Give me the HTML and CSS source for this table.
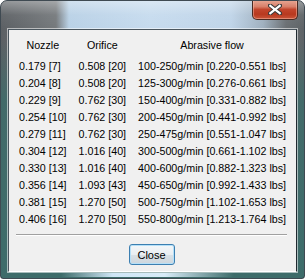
FILE: index.html
```html
<!DOCTYPE html>
<html>
<head>
<meta charset="utf-8">
<link rel="stylesheet" href="styles.css">
</head>
<body>
<div class="window">
  <div class="titlebar">
    <div class="close-x">
      <svg width="14" height="11" viewBox="0 0 14 11">
        <path d="M2 1.5 L12 9.5 M12 1.5 L2 9.5" stroke="#3a3a3a" stroke-width="4.2" stroke-linecap="square"/>
        <path d="M2.3 1.8 L11.7 9.2 M11.7 1.8 L2.3 9.2" stroke="#ffffff" stroke-width="2.2" stroke-linecap="square"/>
      </svg>
    </div>
  </div>
  <div class="client">
    <div class="table">
      <div class="th">Nozzle</div><div class="th">Orifice</div><div class="th">Abrasive flow</div>
      <div class="td first">0.179 [7]</div><div class="td first">0.508 [20]</div><div class="td first">100-250g/min [0.220-0.551 lbs]</div>
      <div class="td">0.204 [8]</div><div class="td">0.508 [20]</div><div class="td">125-300g/min [0.276-0.661 lbs]</div>
      <div class="td">0.229 [9]</div><div class="td">0.762 [30]</div><div class="td">150-400g/min [0.331-0.882 lbs]</div>
      <div class="td">0.254 [10]</div><div class="td">0.762 [30]</div><div class="td">200-450g/min [0.441-0.992 lbs]</div>
      <div class="td">0.279 [11]</div><div class="td">0.762 [30]</div><div class="td">250-475g/min [0.551-1.047 lbs]</div>
      <div class="td">0.304 [12]</div><div class="td">1.016 [40]</div><div class="td">300-500g/min [0.661-1.102 lbs]</div>
      <div class="td">0.330 [13]</div><div class="td">1.016 [40]</div><div class="td">400-600g/min [0.882-1.323 lbs]</div>
      <div class="td">0.356 [14]</div><div class="td">1.093 [43]</div><div class="td">450-650g/min [0.992-1.433 lbs]</div>
      <div class="td">0.381 [15]</div><div class="td">1.270 [50]</div><div class="td">500-750g/min [1.102-1.653 lbs]</div>
      <div class="td">0.406 [16]</div><div class="td">1.270 [50]</div><div class="td">550-800g/min [1.213-1.764 lbs]</div>
    </div>
    <div class="sep"></div>
    <div class="actions">
      <button class="btn">Close</button>
    </div>
  </div>
</div>
</body>
</html>
```

FILE: styles.css
```css
html, body {
  margin: 0;
  padding: 0;
  width: 305px;
  height: 279px;
  overflow: hidden;
  background: #ffffff;
}

.window {
  box-sizing: border-box;
  width: 305px;
  height: 279px;
  border: 1px solid #3f4a52;
  border-radius: 7px 7px 3px 3px;
  display: flex;
  flex-direction: column;
  background:
    linear-gradient(to bottom, rgba(255,255,255,0.35) 0, rgba(255,255,255,0.05) 14px, rgba(255,255,255,0) 28px),
    linear-gradient(to bottom, rgba(0,0,0,0) 0, rgba(0,0,0,0) 266px, #1a1f22 269px, #101416 277px),
    linear-gradient(to right, #5c6064 0, #75797c 55px, #b9d1e6 68px, #c6dbee 150px, #bfd4e8 230px, #9fb0bf 262px, #6a6f73 285px, #5d6265 305px);
  position: relative;
  overflow: hidden;
}

.window::before {
  content: "";
  position: absolute;
  left: 0;
  right: 0;
  top: 40px;
  bottom: 0;
  background: linear-gradient(to bottom, rgba(62,108,106,0) 0, rgba(62,108,106,0.85) 60px, #3d6c6a 100%);
  pointer-events: none;
}

.window::after {
  content: "";
  position: absolute;
  left: 60px;
  right: 70px;
  bottom: 1px;
  height: 4px;
  background: linear-gradient(to right, rgba(180,215,240,0), #cfe6f6 30%, #d8ecf8 60%, rgba(180,215,240,0));
  pointer-events: none;
}

.titlebar {
  height: 28px;
  display: flex;
  justify-content: flex-end;
  align-items: flex-start;
  padding-right: 6px;
  position: relative;
  z-index: 1;
}

.close-x {
  box-sizing: border-box;
  width: 46px;
  height: 20px;
  margin-top: -1px;
  border: 1px solid #4a2a22;
  border-top: none;
  border-radius: 0 0 5px 5px;
  background: linear-gradient(to bottom, #e8a996 0, #d8806a 35%, #c2452c 50%, #b8391f 75%, #c9553a 100%);
  box-shadow: inset 0 0 0 1px rgba(255,200,180,0.45);
  display: flex;
  align-items: center;
  justify-content: center;
}

.close-x svg {
  display: block;
}

.client {
  box-sizing: border-box;
  margin: 0 7px 0 7px;
  height: 243px;
  border: 1px solid #4b565e;
  border-bottom-color: #ffffff;
  border-right-color: #1f2a30;
  background: #f0f0f0;
  position: relative;
  z-index: 1;
  font-family: "Liberation Sans", Arial, sans-serif;
  font-size: 10.7px;
  color: #000;
  display: flex;
  flex-direction: column;
  box-shadow: 0 0 0 1px rgba(255,255,255,0.55);
}

.table {
  display: grid;
  grid-template-columns: auto auto auto;
  justify-content: start;
  column-gap: 12px;
  padding: 7px 0 0 10px;
  line-height: 17px;
}

.th {
  justify-self: center;
}

.td.first {
  margin-top: 4px;
}

.sep {
  margin: 6px 9px 0 7px;
  height: 0;
  border-top: 1px solid #a0a0a0;
  border-bottom: 1px solid #ffffff;
}

.actions {
  display: flex;
  justify-content: center;
  padding-top: 8px;
  padding-right: 2px;
}

.btn {
  box-sizing: border-box;
  width: 46px;
  height: 21px;
  padding: 0;
  font-family: "Liberation Sans", Arial, sans-serif;
  font-size: 11px;
  color: #000;
  border: 1px solid #3c7fb1;
  border-radius: 3px;
  background: linear-gradient(to bottom, #f4f7f9 0, #e9eef2 50%, #d9e1e7 51%, #cdd6dd 100%);
  box-shadow: inset 0 0 0 1px #b5e0f8;
}
```
